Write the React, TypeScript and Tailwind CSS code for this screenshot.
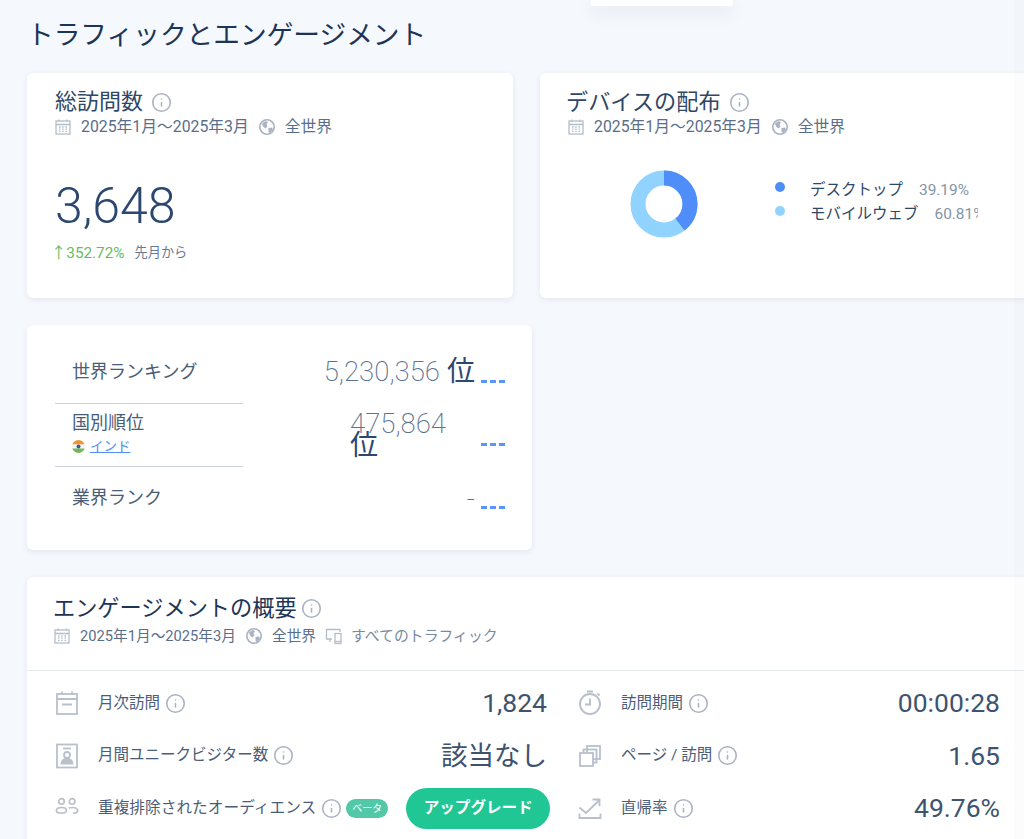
import React from 'react';
import { Info } from 'lucide-react';

const CalendarIcon = () => (
  <svg width="18" height="18" viewBox="0 0 18 18" fill="none" stroke="#b4bdca" strokeWidth="1.3" className="shrink-0">
    <rect x="2" y="3" width="14" height="13" />
    <path d="M2 6.5h14M5 1.5v2M13 1.5v2" />
    <path d="M5 9h1.5M8.2 9h1.5M11.5 9h1.5M5 11.2h1.5M8.2 11.2h1.5M11.5 11.2h1.5M5 13.4h1.5M8.2 13.4h1.5M11.5 13.4h1.5" />
  </svg>
);

const GlobeIcon = () => (
  <svg width="18" height="18" viewBox="0 0 18 18" className="shrink-0">
    <circle cx="9" cy="9" r="7.2" fill="none" stroke="#a9b3c1" strokeWidth="1.6" />
    <path d="M4 5.5 7.5 3 10 4 8.5 6.5 9.5 8.5 7.5 10.5 5 8.5ZM10.5 10 14 9.5 15 11.5 12 15 10.5 14Z" fill="#a9b3c1" />
  </svg>
);

const DevicesIcon = () => (
  <svg width="18" height="18" viewBox="0 0 18 18" fill="none" stroke="#b4bdca" strokeWidth="1.3" className="shrink-0">
    <path d="M7 12H1.5V2.5H15V5" />
    <path d="M5 12v3" />
    <rect x="10" y="6.5" width="6" height="10" />
    <path d="M10 14.5h6" />
  </svg>
);

const Tip = () => <Info size={21} strokeWidth={1.8} className="shrink-0 text-[#a9b3c1]" />;

const Meta = () => (
  <div className="flex items-center gap-[9px] text-[15.8px] leading-[20px] text-[#5a6e8a] whitespace-nowrap">
    <CalendarIcon />
    <span>2025年1月～2025年3月</span>
    <GlobeIcon />
    <span>全世界</span>
  </div>
);

const Dashes = () => (
  <div className="flex gap-[3px] mt-[17px] shrink-0">
    <span className="w-[6px] h-[3px] bg-[#5b93ff]" />
    <span className="w-[6px] h-[3px] bg-[#5b93ff]" />
    <span className="w-[6px] h-[3px] bg-[#5b93ff]" />
  </div>
);

const Donut = () => (
  <svg width="68" height="68" viewBox="0 0 68 68" className="shrink-0">
    <circle cx="34" cy="34" r="26" fill="none" stroke="#8fd3fe" strokeWidth="15" />
    <circle
      cx="34"
      cy="34"
      r="26"
      fill="none"
      stroke="#4f8df9"
      strokeWidth="15"
      strokeDasharray="64 163.4"
      transform="rotate(-90 34 34)"
    />
  </svg>
);

const MonthIcon = () => (
  <svg width="24" height="26" viewBox="0 0 24 26" fill="none" stroke="#b8c0cc" strokeWidth="1.8">
    <rect x="2" y="4" width="20" height="20" />
    <path d="M2 9h20M7 1.5V5M17 1.5V5M7 14.5h10" />
  </svg>
);
const UniqueIcon = () => (
  <svg width="24" height="26" viewBox="0 0 24 26" fill="none" stroke="#b8c0cc" strokeWidth="1.8">
    <rect x="2" y="1.5" width="20" height="23" />
    <path d="M8 5.5h8" />
    <circle cx="12" cy="12" r="3" />
    <path d="M6.5 20.5c.5-3.5 2.5-4.5 5.5-4.5s5 1 5.500 4.500Z" fill="#b8c0cc" />
  </svg>
);
const PeopleIcon = () => (
  <svg width="26" height="22" viewBox="0 0 26 22" fill="none" stroke="#b8c0cc" strokeWidth="1.8">
    <circle cx="7" cy="5" r="3" />
    <circle cx="18.5" cy="5" r="3" />
    <path d="M1.5 15c0-2.500 2.500-3.500 5.500-3.500s5.500 1 5.500 3.500-2.500 2.500-5.500 2.500S1.500 17.500 1.500 15Z" />
    <path d="M15 12c1-.4 2.400-.5 3.500-.5 3 0 6 1 6 3.500 0 2-2.500 3-5 2.500" />
  </svg>
);
const TimerIcon = () => (
  <svg width="24" height="26" viewBox="0 0 24 26" fill="none" stroke="#b8c0cc" strokeWidth="1.9">
    <circle cx="12" cy="14" r="10" />
    <path d="M12 8.5V14.5H7M9 1.5h6M19.5 3.5l2 2" />
  </svg>
);
const PagesIcon = () => (
  <svg width="24" height="24" viewBox="0 0 24 24" fill="none" stroke="#b8c0cc" strokeWidth="1.8">
    <rect x="9" y="2" width="13" height="13" />
    <rect x="5.5" y="5.5" width="13" height="13" />
    <rect x="2" y="9" width="13" height="13" fill="#fff" />
  </svg>
);
const BounceIcon = () => (
  <svg width="24" height="24" viewBox="0 0 24 24" fill="none" stroke="#b8c0cc" strokeWidth="1.8">
    <path d="M1.5 11.5 8 17 21 4.5M14.500 3.500H21.500V10M1.500 17.500V22H22.500V17.500" />
  </svg>
);

const Metric = ({
  icon,
  label,
  value,
}: {
  icon: React.ReactNode;
  label: string;
  value: string;
}) => (
  <div className="flex items-center h-[52.5px]">
    <div className="w-[24px] flex justify-center shrink-0">{icon}</div>
    <span className="ml-[19px] text-[15.5px] text-[#4a5d78] whitespace-nowrap">{label}</span>
    <span className="ml-[5px]"><Tip /></span>
    <span className="ml-auto text-[26.5px] text-[#3d536f] whitespace-nowrap">{value}</span>
  </div>
);

const cardClass = 'bg-white rounded-[6px] shadow-[0_2px_6px_rgba(40,60,90,0.08)]';

export default function App() {
  return (
    <div className="relative w-[1024px] h-[839px] overflow-hidden bg-[#f5f8fd] pl-[27px] font-['Roboto','Noto_Sans_CJK_JP',sans-serif]">
      {/* Dropdown peeking in from above */}
      <div className="absolute top-0 left-[591px] w-[142px] h-[6px] bg-white rounded-b-[2px] shadow-[0_6px_16px_rgba(40,60,80,0.12)]" />
      {/* Faint scrollbar track */}
      <div className="absolute top-0 right-0 bottom-0 w-[10px] bg-black/[0.012] z-10" />

      <h1 className="pt-[16px] h-[73px] text-[26.7px] leading-[38px] text-[#1c3557] whitespace-nowrap">
        トラフィックとエンゲージメント
      </h1>

      {/* Top row */}
      <div className="flex gap-[27px] w-[1100px]">
        <section className={`w-[486px] h-[225px] shrink-0 pl-[28px] pt-[16px] ${cardClass}`}>
          <div className="flex items-center gap-[8px] h-[26px]">
            <h2 className="text-[22px] leading-[26px] text-[#2f4766]">総訪問数</h2>
            <Tip />
          </div>
          <div className="mt-[2px] -ml-[1px]"><Meta /></div>
          <div className="mt-[41px] text-[50px] leading-[56px] font-light text-[#2c4770]">3,648</div>
          <div className="mt-[9px] -ml-[4px] flex items-center text-[15.3px] leading-[20px]">
            <span className="text-[#65bd5e]">↑352.72%</span>
            <span className="ml-[10px] text-[13.2px] text-[#687a92]">先月から</span>
          </div>
        </section>

        <section className={`w-[520px] h-[225px] shrink-0 pl-[27px] pt-[16px] ${cardClass}`}>
          <div className="flex items-center gap-[8px] h-[26px]">
            <h2 className="text-[22.2px] leading-[26px] text-[#2f4766] -ml-[1px]">デバイスの配布</h2>
            <Tip />
          </div>
          <div className="mt-[2px]"><Meta /></div>
          <div className="flex items-center mt-[33px]">
            <div className="ml-[63px]"><Donut /></div>
            <div className="ml-[77px] w-[203px] overflow-hidden whitespace-nowrap mb-[2px]">
              <div className="flex items-center h-[24px]">
                <span className="w-[10px] h-[10px] -mt-[9px] rounded-full bg-[#4f8df9] shrink-0" />
                <span className="ml-[25px] text-[15.5px] text-[#2f4766]">デスクトップ</span>
                <span className="ml-[16px] text-[15.4px] text-[#8594a8]">39.19%</span>
              </div>
              <div className="flex items-center h-[24px]">
                <span className="w-[10px] h-[10px] -mt-[9px] rounded-full bg-[#8fd3fe] shrink-0" />
                <span className="ml-[25px] text-[15.5px] text-[#2f4766]">モバイルウェブ</span>
                <span className="ml-[16px] text-[15.4px] text-[#8594a8]">60.81%</span>
              </div>
            </div>
          </div>
        </section>
      </div>

      {/* Rankings */}
      <section className={`mt-[27px] w-[505px] h-[225px] pl-[28px] pt-[16px] ${cardClass}`}>
        <div className="flex h-[63px] w-[450px]">
          <div className="w-[188px] border-b border-[#ccd3da] pl-[17px] pt-[19px] text-[18px] leading-[24px] text-[#4a5d78] whitespace-nowrap">
            世界ランキング
          </div>
          <div className="ml-auto flex items-center justify-end gap-[6px]">
            <div className="whitespace-nowrap text-[28px] leading-[28px] -mt-[2px]">
              <span className="text-[27.5px] font-extralight text-[#5e7390]">5,230,356</span>
              <span className="ml-[7px] text-[#2c4770]">位</span>
            </div>
            <Dashes />
          </div>
        </div>
        <div className="flex h-[63px] w-[450px]">
          <div className="w-[188px] border-b border-[#ccd3da] pl-[17px] pt-[7px]">
            <div className="text-[18px] leading-[24px] text-[#4a5d78]">国別順位</div>
            <div className="mt-[2px] flex items-center gap-[5px] h-[18px] text-[13.5px] leading-[18px]">
              <svg width="13" height="13" viewBox="0 0 13 13" className="shrink-0">
                <clipPath id="flag"><circle cx="6.5" cy="6.5" r="6.5" /></clipPath>
                <g clipPath="url(#flag)">
                  <rect width="13" height="4.5" fill="#f59331" />
                  <rect y="4.5" width="13" height="4" fill="#f4f4f4" />
                  <rect y="8.5" width="13" height="4.5" fill="#72b65a" />
                  <circle cx="6.5" cy="6.5" r="2" fill="#3c5a8a" />
                </g>
              </svg>
              <a className="text-[#4f8df9] underline">インド</a>
            </div>
          </div>
          <div className="ml-auto flex items-center justify-end gap-[5px]">
            <div className="w-[126px] text-[28px] leading-[22px] -mt-[1px]">
              <span className="text-[27.5px] font-extralight text-[#5e7390]">475,864</span>{' '}
              <span className="text-[#2c4770]">位</span>
            </div>
            <Dashes />
          </div>
        </div>
        <div className="flex h-[63px] w-[450px]">
          <div className="w-[188px] pl-[17px] pt-[19px] text-[18px] leading-[24px] text-[#4a5d78]">業界ランク</div>
          <div className="ml-auto flex items-center justify-end gap-[6px]">
            <span className="text-[28px] leading-[24px] font-extralight text-[#5e7390]">-</span>
            <Dashes />
          </div>
        </div>
      </section>

      {/* Engagement */}
      <section className={`mt-[27px] w-[1040px] h-[300px] ${cardClass}`}>
        <div className="h-[94px] border-b border-[#e4e9ee] pl-[26px] pt-[18px]">
          <div className="flex items-center gap-[4px] h-[26px]">
            <h2 className="text-[22.2px] leading-[26px] text-[#1c3557]">エンゲージメントの概要</h2>
            <Tip />
          </div>
          <div className="mt-[5px] flex items-center gap-[9px] text-[14.7px] leading-[20px] text-[#5a6e8a] whitespace-nowrap">
            <CalendarIcon />
            <span>2025年1月～2025年3月</span>
            <GlobeIcon />
            <span>全世界</span>
            <DevicesIcon />
            <span className="-ml-[1px] text-[14.85px] text-[#7a8a9e]">すべてのトラフィック</span>
          </div>
        </div>

        <div className="flex pl-[28px] pt-[6px]">
          <div className="w-[492px]">
            <Metric icon={<MonthIcon />} label="月次訪問" value="1,824" />
            <Metric icon={<UniqueIcon />} label="月間ユニークビジター数" value="該当なし" />
            <div className="flex items-center h-[52.5px]">
              <div className="w-[24px] flex justify-center shrink-0 -mt-[3px]"><PeopleIcon /></div>
              <span className="ml-[19px] text-[15.7px] text-[#4a5d78] whitespace-nowrap">重複排除されたオーディエンス</span>
              <span className="ml-[5px]"><Tip /></span>
              <span className="ml-[4px] w-[42px] h-[19px] shrink-0 rounded-full bg-[#52c9a6] text-white text-[10px] leading-[19px] text-center">ベータ</span>
              <button className="ml-[18px] w-[144px] h-[41px] shrink-0 rounded-full bg-[#20c795] text-white text-[15.6px] font-bold">
                アップグレード
              </button>
            </div>
          </div>
          <div className="ml-[31px] w-[422px]">
            <Metric icon={<TimerIcon />} label="訪問期間" value="00:00:28" />
            <Metric icon={<PagesIcon />} label="ページ / 訪問" value="1.65" />
            <Metric icon={<BounceIcon />} label="直帰率" value="49.76%" />
          </div>
        </div>
      </section>
    </div>
  );
}
